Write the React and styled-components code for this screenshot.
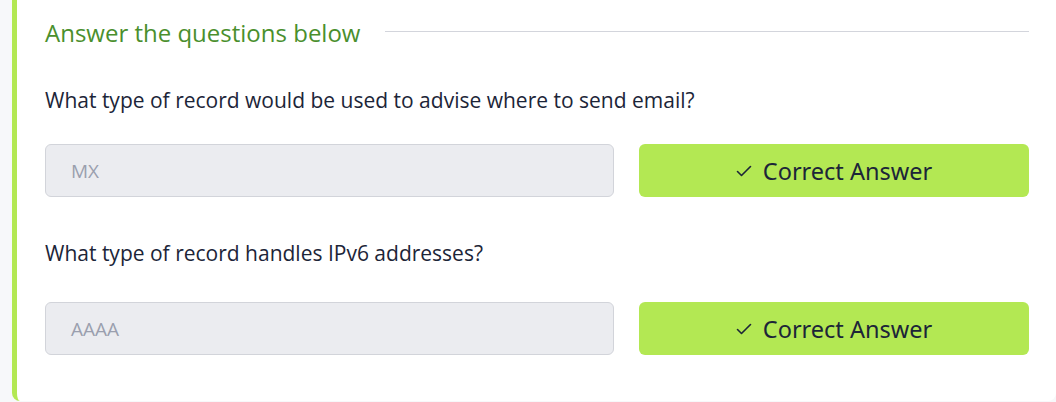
import styled, { createGlobalStyle } from "styled-components";

const GlobalStyle = createGlobalStyle`
  html, body {
    margin: 0;
    padding: 0;
    background: #f7f8fa;
  }
  body {
    font-family: "Open Sans", "Noto Sans", sans-serif;
  }
`;

const Page = styled.div`
  padding: 0 0 1px 12px;
`;

const Card = styled.div`
  background: #ffffff;
  border-left: 5px solid #b3e853;
  border-radius: 0 0 8px 8px;
  padding: 17px 27px 46px 28px;
  display: flex;
  flex-direction: column;
`;

const HeadRow = styled.div`
  display: flex;
  align-items: center;
  gap: 25px;
  margin-bottom: 37px;
`;

const Title = styled.h3`
  margin: 0;
  font-weight: 400;
  font-size: 24px;
  line-height: 32px;
  color: #4a8f2d;
  white-space: nowrap;
`;

const Rule = styled.div`
  flex: 1;
  height: 1px;
  background: #d3d5dc;
  margin-top: -3px;
`;

const Question = styled.p`
  margin: 0;
  font-size: 21px;
  line-height: 28px;
  color: #1c2538;
`;

const AnswerRow = styled.div`
  display: flex;
  gap: 25px;
  margin: ${p => p.before}px 0 ${p => p.after}px;
`;

const Field = styled.div`
  flex: 1;
  height: 53px;
  box-sizing: border-box;
  background: #ebecf0;
  border: 1px solid #d2d4da;
  border-radius: 6px;
  padding: 0 25px;
  display: flex;
  align-items: center;
  color: #9a9fae;
  font-size: 19px;
`;

const Button = styled.div`
  width: 390px;
  height: 53px;
  background: #b3e853;
  border-radius: 6px;
  display: flex;
  align-items: center;
  justify-content: center;
  gap: 11px;
  color: #1c2538;
  font-size: 23.5px;
  font-family: "Noto Sans", sans-serif;
`;

function Check() {
  return (
    <svg width="16" height="16" viewBox="0 0 16 16" fill="none">
      <path d="M1.5 8.5 L5.5 12.5 L14.5 3.5" stroke="#1c2538" strokeWidth="1.6" strokeLinecap="round" strokeLinejoin="round" />
    </svg>
  );
}

const items = [
  { q: "What type of record would be used to advise where to send email?", a: "MX", before: 30, after: 42 },
  { q: "What type of record handles IPv6 addresses?", a: "AAAA", before: 35, after: 0 },
];

export default function App() {
  return (
    <Page>
      <GlobalStyle />
      <Card>
        <HeadRow>
          <Title>Answer the questions below</Title>
          <Rule />
        </HeadRow>
        {items.map((it, i) => (
          <div key={i}>
            <Question>{it.q}</Question>
            <AnswerRow before={it.before} after={it.after}>
              <Field>{it.a}</Field>
              <Button>
                <Check />
                Correct Answer
              </Button>
            </AnswerRow>
          </div>
        ))}
      </Card>
    </Page>
  );
}
